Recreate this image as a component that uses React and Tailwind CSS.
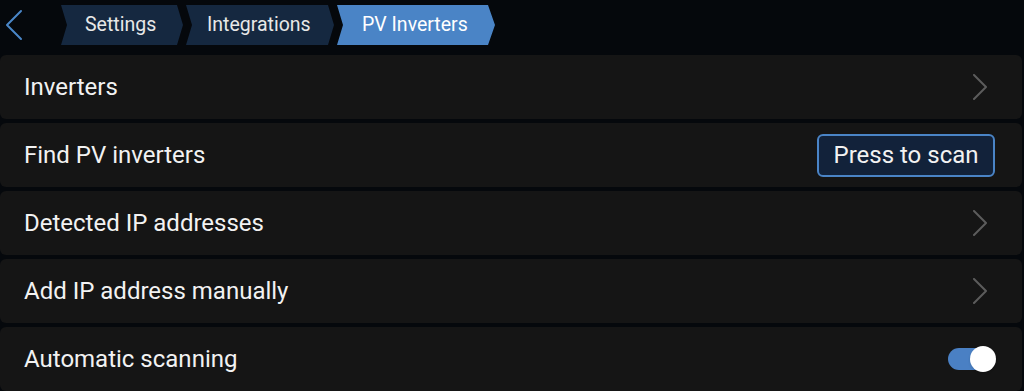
import React from "react";

function Chevron() {
  return (
    <svg width="16" height="26" viewBox="0 0 16 26" fill="none" className="shrink-0 mr-[7px]">
      <path d="M2 1 L14 13 L2 25" stroke="#5c5c5c" strokeWidth="2" strokeLinecap="round" strokeLinejoin="round" />
    </svg>
  );
}

function Row({ label, children }) {
  return (
    <div className="h-16 w-[1022px] rounded-md bg-[#151515] flex items-center justify-between pl-6 pr-[27px]">
      <span className="text-[24px] text-[#f2f2f2] leading-none">{label}</span>
      {children}
    </div>
  );
}

export default function App() {
  return (
    <div className="w-[1024px] h-[391px] overflow-hidden bg-[#05080c] flex flex-col" style={{ fontFamily: "Roboto, 'Noto Sans', sans-serif" }}>
      <div className="h-[56px] flex items-start pt-[5px]">
        <div className="w-[61px] h-10 flex items-center pl-[5px]">
          <svg width="18" height="32" viewBox="0 0 18 32" fill="none">
            <path d="M16 2 L2 16 L16 30" stroke="#4a86c8" strokeWidth="2" strokeLinecap="round" strokeLinejoin="round" />
          </svg>
        </div>
        <div className="flex gap-[3px]">
          <div className="h-10 w-[122px] bg-[#152840] flex items-center pl-6 text-[19.5px] text-[#e8e8e8] [clip-path:polygon(0_0,calc(100%-6px)_0,100%_50%,calc(100%-6px)_100%,0_100%,6px_50%)]">
            Settings
          </div>
          <div className="h-10 w-[148px] bg-[#152840] flex items-center pl-[21px] text-[19.5px] text-[#e8e8e8] [clip-path:polygon(0_0,calc(100%-6px)_0,100%_50%,calc(100%-6px)_100%,0_100%,6px_50%)]">
            Integrations
          </div>
          <div className="h-10 w-[158px] bg-[#4a84c6] flex items-center pl-[25px] text-[19.5px] text-white [clip-path:polygon(0_0,calc(100%-7px)_0,100%_50%,calc(100%-7px)_100%,0_100%,6px_50%)]">
            PV Inverters
          </div>
        </div>
      </div>
      <div className="flex flex-col gap-1">
        <Row label="Inverters"><Chevron /></Row>
        <Row label="Find PV inverters">
          <button className="h-[43px] w-[178px] flex items-center justify-center rounded-md border-2 border-[#4a84c6] bg-[#12223a] text-[24px] text-[#f2f2f2] leading-none">
            Press to scan
          </button>
        </Row>
        <Row label="Detected IP addresses"><Chevron /></Row>
        <Row label="Add IP address manually"><Chevron /></Row>
        <Row label="Automatic scanning">
          <div className="relative w-[48px] h-[26px] -mr-[1px]">
            <div className="absolute left-0 top-[2px] w-[42px] h-[22px] rounded-full bg-[#4a80c4]" />
            <div className="absolute right-0 top-0 w-[26px] h-[26px] rounded-full bg-white shadow" />
          </div>
        </Row>
      </div>
    </div>
  );
}
